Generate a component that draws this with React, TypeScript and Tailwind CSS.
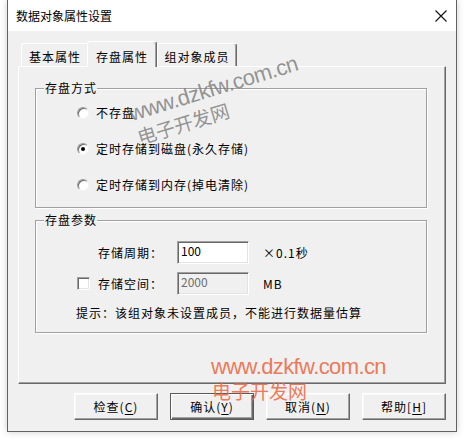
import React from "react";

const cjk = "font-['Noto_Sans_CJK_SC',sans-serif]";
const txt = "text-[12px] leading-[16px] tracking-[1px] text-black";
const sunken =
  "border border-t-[#a0a0a0] border-l-[#a0a0a0] border-b-white border-r-white shadow-[inset_1px_1px_0_#696969,inset_-1px_-1px_0_#e3e3e3]";

function Radio({ checked }: { checked?: boolean }) {
  return (
    <span className="flex items-center justify-center w-[12px] h-[12px] rounded-full bg-white border border-t-[#9a9a9a] border-l-[#9a9a9a] border-b-[#f4f4f4] border-r-[#f4f4f4] shadow-[inset_1px_1px_0_#6a6a6a]">
      {checked && <span className="w-[4px] h-[4px] rounded-full bg-black" />}
    </span>
  );
}

function Group({
  label,
  className,
  children,
}: {
  label: string;
  className: string;
  children: React.ReactNode;
}) {
  return (
    <div
      className={`relative w-[392px] ml-[16px] border border-[#a0a0a0] shadow-[inset_1px_1px_0_white,1px_1px_0_white] ${className}`}
    >
      <span className={`absolute top-[-9px] left-[8px] bg-[#f0f0f0] pl-[1px] ${txt}`}>{label}</span>
      {children}
    </div>
  );
}

function Btn({ label, u, bracket, def }: { label: string; u: string; bracket?: boolean; def?: boolean }) {
  const base = def
    ? "border border-[#5a5a5a] shadow-[inset_1px_1px_0_white,inset_-1px_-1px_0_#696969,inset_-2px_-2px_0_#a0a0a0]"
    : "border border-t-white border-l-white border-b-[#696969] border-r-[#696969] shadow-[inset_-1px_-1px_0_#a0a0a0,inset_1px_1px_0_#f8f8f8]";
  return (
    <div className={`w-[84px] h-[27px] flex items-center justify-center bg-[#f0f0f0] ${base} ${txt}`}>
      {label}
      {bracket ? "[" : "("}
      <span className="underline underline-offset-[2px]">{u}</span>
      {bracket ? "]" : ")"}
    </div>
  );
}

export default function App() {
  return (
    <div className={`relative w-[464px] h-[439px] bg-white overflow-hidden ${cjk}`}>
      <div className="ml-[7px] w-[450px] h-[432px] flex flex-col border-x border-b border-[#626262] shadow-[0_0_7px_rgba(0,0,0,0.2)]">
        {/* title bar */}
        <div className="h-[31px] bg-white flex items-center justify-between pl-[8px] pr-[9px]">
          <span className="text-[12px] leading-[16px] text-black">数据对象属性设置</span>
          <svg width="12" height="12" viewBox="0 0 12 12">
            <path d="M0.5 0.5 L11.5 11.5 M11.5 0.5 L0.5 11.5" stroke="#111" strokeWidth="1.1" />
          </svg>
        </div>
        {/* body */}
        <div className="flex-1 bg-[#f0f0f0] px-[10px] pt-[10px] flex flex-col">
          {/* tabs */}
          <div className="h-[26px] -mb-[1px] flex items-start pl-[3px] relative z-10">
            <div
              className={`mt-[2px] w-[68px] h-[23px] flex justify-center pt-[5px] border-t border-l border-r border-t-white border-l-white border-r-[#696969] rounded-t-[3px] ${txt}`}
            >
              基本属性
            </div>
            <div
              className={`-ml-[2px] w-[70px] h-[26px] flex justify-center pt-[7px] bg-[#f0f0f0] border-t border-l border-r border-t-white border-l-white border-r-[#696969] rounded-t-[3px] shadow-[inset_-1px_0_0_#a0a0a0] ${txt}`}
            >
              存盘属性
            </div>
            <div
              className={`mt-[2px] w-[80px] h-[23px] flex justify-center pt-[5px] border-t border-l border-r border-t-white border-l-white border-r-[#696969] rounded-t-[3px] shadow-[inset_-1px_0_0_#a0a0a0] ${txt}`}
            >
              组对象成员
            </div>
          </div>
          {/* panel */}
          <div className="h-[318px] w-[428px] flex flex-col border border-t-white border-l-white border-b-[#696969] border-r-[#696969] shadow-[inset_-1px_-1px_0_#a0a0a0]">
            <Group label="存盘方式" className="mt-[21px] h-[120px] pt-[14px] flex flex-col gap-[16px]">
              {[
                ["不存盘", false],
                ["定时存储到磁盘(永久存储)", true],
                ["定时存储到内存(掉电清除)", false],
              ].map(([l, c]) => (
                <div key={l as string} className="h-[20px] flex items-center pl-[41px] gap-[7px]">
                  <Radio checked={c as boolean} />
                  <span className={txt}>{l as string}</span>
                </div>
              ))}
            </Group>
            <Group label="存盘参数" className="mt-[12px] h-[113px] pt-[20px] flex flex-col">
              <div className="h-[23px] flex items-center pl-[62px]">
                <span className={`w-[79px] ${txt}`}>存储周期：</span>
                <div className={`w-[72px] h-[23px] bg-white px-[3px] pt-[1px] text-[12px] leading-[16px] text-black ${sunken}`}>
                  100
                </div>
                <span className={`ml-[14px] ${txt}`}>×0.1秒</span>
              </div>
              <div className="mt-[8px] h-[23px] flex items-center pl-[41px]">
                <span className={`w-[13px] h-[13px] bg-white ${sunken}`} />
                <span className={`ml-[8px] w-[79px] ${txt}`}>存储空间：</span>
                <div className={`w-[72px] h-[23px] bg-[#f0f0f0] px-[3px] pt-[1px] text-[12px] leading-[16px] text-[#6d6d6d] ${sunken}`}>
                  2000
                </div>
                <span className={`ml-[14px] ${txt}`}>MB</span>
              </div>
              <div className={`mt-[10px] pl-[40px] ${txt}`}>提示：该组对象未设置成员，不能进行数据量估算</div>
            </Group>
          </div>
          {/* buttons */}
          <div className="mt-[9px] flex justify-end gap-[12px]">
            <Btn label="检查" u="C" />
            <Btn label="确认" u="Y" def />
            <Btn label="取消" u="N" />
            <Btn label="帮助" u="H" bracket />
          </div>
        </div>
      </div>

      {/* rotated watermark */}
      <div className="absolute left-[126px] top-[102px] origin-top-left -rotate-[17deg] text-[#7a7a7a]/80 pointer-events-none">
        <div className="font-['Liberation_Sans',sans-serif] text-[22px] leading-[26px] tracking-[-0.6px]">www.dzkfw.com.cn</div>
        <div className="text-[19px] leading-[22px] ml-[1px]">电子开发网</div>
      </div>
      {/* horizontal watermark */}
      <div className="absolute left-[211px] top-[354px] text-[#ec6a45]/90 pointer-events-none">
        <div className="font-['Liberation_Sans',sans-serif] text-[22px] leading-[26px] tracking-[-0.6px]">www.dzkfw.com.cn</div>
        <div className="text-[19px] leading-[22px] ml-[1px]">电子开发网</div>
      </div>
    </div>
  );
}
